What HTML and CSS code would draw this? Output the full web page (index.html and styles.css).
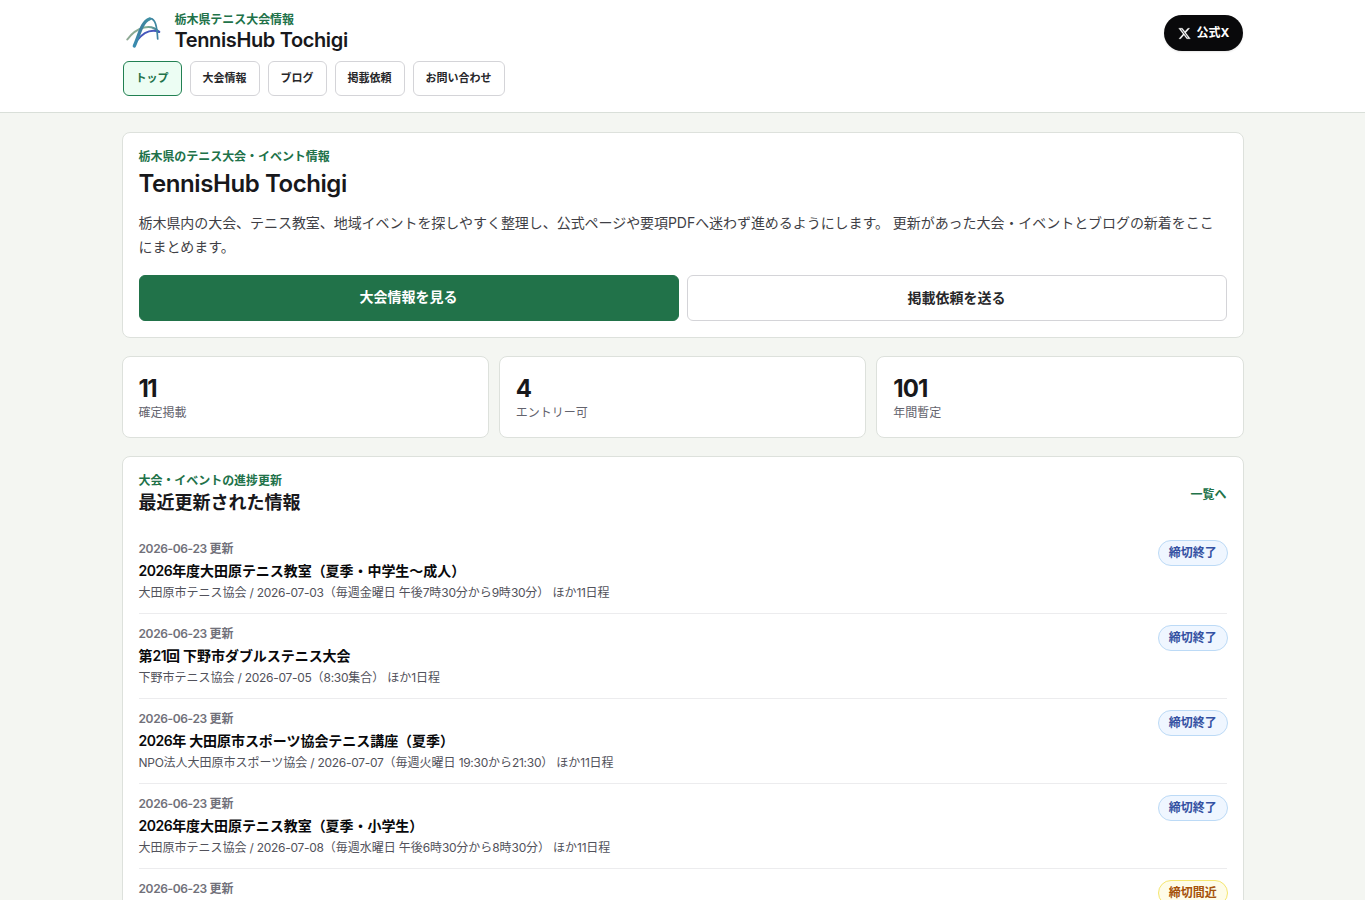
FILE: index.html
```html
<!DOCTYPE html>
<html lang="ja">
<head>
<meta charset="utf-8">
<title>TennisHub Tochigi</title>
<link rel="stylesheet" href="styles.css">
</head>
<body>
<header class="header">
  <div class="header-inner">
    <div class="brand-row">
      <a class="brand">
        <svg class="logo" viewBox="0 0 40 40" fill="none" stroke-linecap="round">
          <defs>
            <linearGradient id="g1" x1="0" y1="1" x2="1" y2="0"><stop offset="0" stop-color="#3a8cb0"/><stop offset=".5" stop-color="#3d7f9f"/><stop offset="1" stop-color="#3f8fa3"/></linearGradient>
            <linearGradient id="g2" x1="0" y1="0" x2="1" y2="0"><stop offset="0" stop-color="#8fa994"/><stop offset=".6" stop-color="#82ad93"/><stop offset="1" stop-color="#377f99"/></linearGradient>
          </defs>
          <path d="M4.300 25.500C9 19 15 15 21 13.500C27 12 32 13.500 36 18" stroke="url(#g2)" stroke-width="2.100"/>
          <path d="M14 26.500C19 20 27 14.500 36.300 17.800" stroke="#4657bc" stroke-width="2"/>
          <path d="M26 4.800C32.500 3 34 13 34.700 25" stroke="url(#g1)" stroke-width="1.700"/>
          <path d="M11.300 32C16 22 18.500 7.500 26.500 5" stroke="url(#g1)" stroke-width="3.300"/>
        </svg>
        <div>
          <div class="eyebrow">栃木県テニス大会情報</div>
          <div class="brand-name">TennisHub Tochigi</div>
        </div>
      </a>
      <a class="x-link">
        <svg class="x-icon" viewBox="0 0 24 24" fill="currentColor" stroke="currentColor" stroke-width=".5"><path d="M18.244 2.250h3.308l-7.227 8.260 8.502 11.240H16.170l-5.214-6.817L4.990 21.750H1.680l7.730-8.835L1.254 2.250H8.080l4.713 6.231zm-1.161 17.520h1.833L7.084 4.126H5.117z"/></svg>
        <span>公式X</span>
      </a>
    </div>
    <nav class="nav">
      <a class="nav-item active">トップ</a>
      <a class="nav-item">大会情報</a>
      <a class="nav-item">ブログ</a>
      <a class="nav-item">掲載依頼</a>
      <a class="nav-item">お問い合わせ</a>
    </nav>
  </div>
</header>
<main class="main">
  <section class="card hero">
    <div class="eyebrow">栃木県のテニス大会・イベント情報</div>
    <h1 class="hero-title">TennisHub Tochigi</h1>
    <p class="lead">栃木県内の大会、テニス教室、地域イベントを探しやすく整理し、公式ページや要項PDFへ迷わず進めるようにします。 更新があった大会・イベントとブログの新着をここにまとめます。</p>
    <div class="actions">
      <a class="button primary">大会情報を見る</a>
      <a class="button">掲載依頼を送る</a>
    </div>
  </section>
  <section class="stats">
    <div class="card stat"><div class="number ones">11</div><div class="label">確定掲載</div></div>
    <div class="card stat"><div class="number">4</div><div class="label">エントリー可</div></div>
    <div class="card stat"><div class="number">101</div><div class="label">年間暫定</div></div>
  </section>
  <section class="card updates">
    <div class="section-head">
      <div>
        <div class="eyebrow">大会・イベントの進捗更新</div>
        <h2 class="section-title">最近更新された情報</h2>
      </div>
      <a class="more">一覧へ</a>
    </div>
    <div class="list">
      <article class="row">
        <div><div class="date"><span class="en">2026-06-23 </span>更新</div><h3 class="title"><span class="en">2026</span>年度大田原テニス教室（夏季・中学生〜成人）</h3><div class="meta">大田原市テニス協会<span class="en"> / 2026-07-03</span>（毎週金曜日<span class="en"> </span>午後<span class="en">7</span>時<span class="en">30</span>分から<span class="en">9</span>時<span class="en">30</span>分）<span class="en"> </span>ほか<span class="en">11</span>日程</div></div>
        <span class="chip">締切終了</span>
      </article>
      <article class="row">
        <div><div class="date"><span class="en">2026-06-23 </span>更新</div><h3 class="title">第<span class="en">21</span>回<span class="en"> </span>下野市ダブルステニス大会</h3><div class="meta">下野市テニス協会<span class="en"> / 2026-07-05</span>（<span class="en">8:30</span>集合）<span class="en"> </span>ほか<span class="en">1</span>日程</div></div>
        <span class="chip">締切終了</span>
      </article>
      <article class="row">
        <div><div class="date"><span class="en">2026-06-23 </span>更新</div><h3 class="title"><span class="en">2026</span>年<span class="en"> </span>大田原市スポーツ協会テニス講座（夏季）</h3><div class="meta"><span class="en">NPO</span>法人大田原市スポーツ協会<span class="en"> / 2026-07-07</span>（毎週火曜日<span class="en"> 19:30</span>から<span class="en">21:30</span>）<span class="en"> </span>ほか<span class="en">11</span>日程</div></div>
        <span class="chip">締切終了</span>
      </article>
      <article class="row">
        <div><div class="date"><span class="en">2026-06-23 </span>更新</div><h3 class="title"><span class="en">2026</span>年度大田原テニス教室（夏季・小学生）</h3><div class="meta">大田原市テニス協会<span class="en"> / 2026-07-08</span>（毎週水曜日<span class="en"> </span>午後<span class="en">6</span>時<span class="en">30</span>分から<span class="en">8</span>時<span class="en">30</span>分）<span class="en"> </span>ほか<span class="en">11</span>日程</div></div>
        <span class="chip">締切終了</span>
      </article>
      <article class="row last">
        <div><div class="date"><span class="en">2026-06-23 </span>更新</div></div>
        <span class="chip soon">締切間近</span>
      </article>
    </div>
  </section>
</main>
</body>
</html>
```
FILE: styles.css
```css
* { box-sizing: border-box; }
body { margin: 0; background: #f4f6f2; color: #18181b; font-family: Inter, "Noto Sans CJK JP", sans-serif; }
h1, h2, h3, p { margin: 0; }
.header { height: 113px; background: #fff; border-bottom: 1px solid #d9dfd9; }
.header-inner { width: 1120px; margin-left: 122.5px; padding-top: 12px; }
.brand-row { display: flex; justify-content: space-between; height: 49px; }
.brand { display: flex; gap: 12px; }
.logo { width: 40px; height: 40px; margin-top: 2px; }
.eyebrow { font-size: 12px; line-height: 16px; font-weight: 600; color: #217249; letter-spacing: -0.05px; }
.brand-name { font-size: 20px; line-height: 25px; font-weight: 600; letter-spacing: -0.37px; }
.x-link { display: flex; align-items: center; justify-content: center; gap: 6px; width: 79px; height: 36px; margin-top: 3px; padding-left: 1px; border-radius: 18px; background: #09090b; color: #fff; font-size: 12px; line-height: 16px; font-weight: 700; box-shadow: 0 1px 2px rgba(0, 0, 0, .1); }
.x-icon { width: 13px; height: 13px; }
.nav { display: flex; gap: 8px; }
.nav-item { height: 35px; padding: 0 12px; border: 1px solid #d4d4d8; border-radius: 6px; font-size: 11px; line-height: 32px; font-weight: 600; color: #27272a; }
.nav-item.active { border-color: #218052; background: #ecfdf3; color: #217249; }
.main { width: 1122px; height: 787px; overflow: hidden; margin-left: 121.5px; padding-top: 19px; }
.card { background: #fff; border: 1px solid #dde1dc; border-radius: 8px; }
.hero { height: 206px; padding: 16px; }
.hero-title { font-size: 24px; line-height: 32px; margin-top: 3px; font-weight: 600; letter-spacing: -0.42px; }
.lead { margin-top: 11px; font-size: 14px; line-height: 24px; color: #3f3f46; letter-spacing: -0.055px; }
.actions { display: grid; grid-template-columns: 1fr 1fr; gap: 8px; margin-top: 16px; }
.button { height: 46px; border: 1px solid #d4d4d8; border-radius: 6px; text-align: center; font-size: 14px; line-height: 43px; font-weight: 700; color: #27272a; }
.button.primary { background: #217249; border-color: #217249; color: #fff; line-height: 42px; }
.stats { display: grid; grid-template-columns: repeat(3, 1fr); gap: 10px; margin-top: 18px; }
.stat { height: 82px; padding: 16px; }
.number { font-size: 24px; line-height: 32px; font-weight: 700; letter-spacing: -0.8px; }
.number.ones { letter-spacing: -1.5px; }
.label { font-size: 12px; line-height: 16px; color: #63636d; }
.updates { height: 520px; margin-top: 18px; padding: 16px; }
.section-head { display: flex; justify-content: space-between; align-items: center; height: 44px; }
.section-title { font-size: 18px; line-height: 28px; font-weight: 600; }
.more { font-size: 12px; line-height: 16px; font-weight: 700; color: #217249; }
.list { padding-top: 12px; }
.row { display: flex; justify-content: space-between; align-items: flex-start; height: 85px; padding-top: 11px; border-bottom: 1px solid #ececee; }
.row.last { border-bottom: 0; }
.date { margin-top: 1px; font-size: 12px; line-height: 16px; font-weight: 600; color: #71717a; }
.date .en { letter-spacing: -0.38px; }
.title { margin-top: 4px; font-size: 14px; line-height: 20px; font-weight: 600; color: #09090b; letter-spacing: -0.05px; }
.title .en { letter-spacing: -0.5px; }
.meta { margin-top: 4px; font-size: 12px; line-height: 16px; color: #52525b; }
.meta .en { letter-spacing: -0.29px; }
.chip { height: 26px; padding: 0 9.9px; margin-right: -1.1px; border: 1px solid #bcdaf6; border-radius: 13px; background: #eff6ff; color: #3451a2; font-size: 12px; line-height: 23px; font-weight: 600; }
.chip.soon { background: #fefce8; border-color: #f5e66f; color: #a5520a; }
```
